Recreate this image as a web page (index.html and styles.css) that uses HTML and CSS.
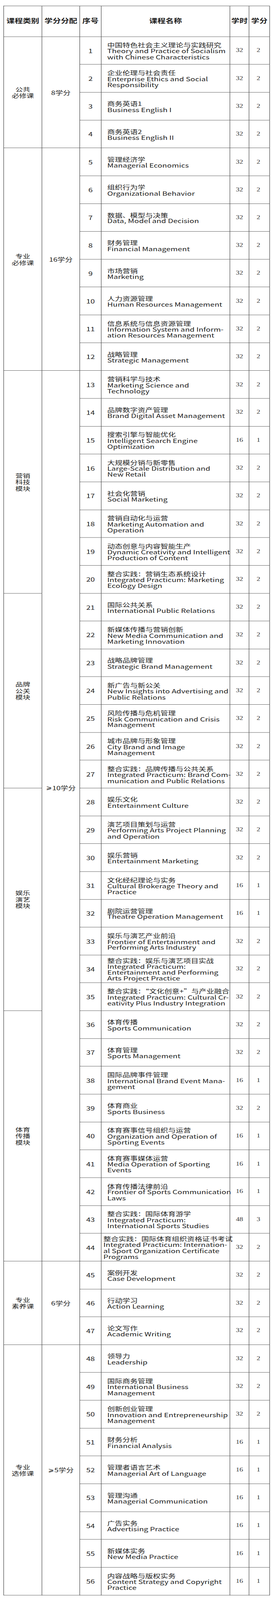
FILE: index.html
```html
<!DOCTYPE html>
<html lang="zh-CN">
<head>
<meta charset="utf-8">
<title>课程设置</title>
<link rel="stylesheet" href="styles.css">
</head>
<body>
<div class="frame">
<div class="page">
<div class="grid">
  <div class="h">课程类别</div>
  <div class="h">学分分配</div>
  <div class="h">序号</div>
  <div class="h">课程名称</div>
  <div class="h">学时</div>
  <div class="h">学分</div>

  <div class="cat s4">公共<br>必修课</div>
  <div class="cr s4">8学分</div>
  <div class="no">1</div><div class="nm"><div class="t"><span class="zh">中国特色社会主义理论与实践研究</span><span class="en">Theory and Practice of Socialism</span><span class="en">with Chinese Characteristics</span></div></div><div class="hr">32</div><div class="pt">2</div>
  <div class="no">2</div><div class="nm"><div class="t"><span class="zh">企业伦理与社会责任</span><span class="en">Enterprise Ethics and Social</span><span class="en">Responsibility</span></div></div><div class="hr">32</div><div class="pt">2</div>
  <div class="no">3</div><div class="nm"><div class="t"><span class="zh">商务英语1</span><span class="en">Business English I</span></div></div><div class="hr">32</div><div class="pt">2</div>
  <div class="no">4</div><div class="nm"><div class="t"><span class="zh">商务英语2</span><span class="en">Business English II</span></div></div><div class="hr">32</div><div class="pt">2</div>

  <div class="cat s8">专业<br>必修课</div>
  <div class="cr s8">16学分</div>
  <div class="no">5</div><div class="nm"><div class="t"><span class="zh">管理经济学</span><span class="en">Managerial Economics</span></div></div><div class="hr">32</div><div class="pt">2</div>
  <div class="no">6</div><div class="nm"><div class="t"><span class="zh">组织行为学</span><span class="en">Organizational Behavior</span></div></div><div class="hr">32</div><div class="pt">2</div>
  <div class="no">7</div><div class="nm"><div class="t"><span class="zh">数据、模型与决策</span><span class="en">Data, Model and Decision</span></div></div><div class="hr">32</div><div class="pt">2</div>
  <div class="no">8</div><div class="nm"><div class="t"><span class="zh">财务管理</span><span class="en">Financial Management</span></div></div><div class="hr">32</div><div class="pt">2</div>
  <div class="no">9</div><div class="nm"><div class="t"><span class="zh">市场营销</span><span class="en">Marketing</span></div></div><div class="hr">32</div><div class="pt">2</div>
  <div class="no">10</div><div class="nm"><div class="t"><span class="zh">人力资源管理</span><span class="en">Human Resources Management</span></div></div><div class="hr">32</div><div class="pt">2</div>
  <div class="no">11</div><div class="nm"><div class="t"><span class="zh">信息系统与信息资源管理</span><span class="en">Information System and Inform-</span><span class="en">ation Resources Management</span></div></div><div class="hr">32</div><div class="pt">2</div>
  <div class="no">12</div><div class="nm"><div class="t"><span class="zh">战略管理</span><span class="en">Strategic Management</span></div></div><div class="hr">32</div><div class="pt">2</div>

  <div class="cat s8">营销<br>科技<br>模块</div>
  <div class="cr s32 offset"><span class="ge">⩾</span>10学分</div>
  <div class="no">13</div><div class="nm"><div class="t"><span class="zh">营销科学与技术</span><span class="en">Marketing Science and</span><span class="en">Technology</span></div></div><div class="hr">32</div><div class="pt">2</div>
  <div class="no">14</div><div class="nm"><div class="t"><span class="zh">品牌数字资产管理</span><span class="en">Brand Digital Asset Management</span></div></div><div class="hr">32</div><div class="pt">2</div>
  <div class="no">15</div><div class="nm"><div class="t"><span class="zh">搜索引擎与智能优化</span><span class="en">Intelligent Search Engine</span><span class="en">Optimization</span></div></div><div class="hr">16</div><div class="pt">1</div>
  <div class="no">16</div><div class="nm"><div class="t"><span class="zh">大规模分销与新零售</span><span class="en">Large-Scale Distribution and</span><span class="en">New Retail</span></div></div><div class="hr">32</div><div class="pt">2</div>
  <div class="no">17</div><div class="nm"><div class="t"><span class="zh">社会化营销</span><span class="en">Social Marketing</span></div></div><div class="hr">32</div><div class="pt">2</div>
  <div class="no">18</div><div class="nm"><div class="t"><span class="zh">营销自动化与运营</span><span class="en">Marketing Automation and</span><span class="en">Operation</span></div></div><div class="hr">32</div><div class="pt">2</div>
  <div class="no">19</div><div class="nm"><div class="t"><span class="zh">动态创意与内容智能生产</span><span class="en">Dynamic Creativity and Intelligent</span><span class="en">Production of Content</span></div></div><div class="hr">32</div><div class="pt">2</div>
  <div class="no">20</div><div class="nm"><div class="t"><span class="zh">整合实践：营销生态系统设计</span><span class="en">Integrated Practicum: Marketing</span><span class="en">Ecology Design</span></div></div><div class="hr">32</div><div class="pt">2</div>

  <div class="cat s7">品牌<br>公关<br>模块</div>
  <div class="no">21</div><div class="nm"><div class="t"><span class="zh">国际公共关系</span><span class="en">International Public Relations</span></div></div><div class="hr">32</div><div class="pt">2</div>
  <div class="no">22</div><div class="nm"><div class="t"><span class="zh">新媒体传播与营销创新</span><span class="en">New Media Communication and</span><span class="en">Marketing Innovation</span></div></div><div class="hr">32</div><div class="pt">2</div>
  <div class="no">23</div><div class="nm"><div class="t"><span class="zh">战略品牌管理</span><span class="en">Strategic Brand Management</span></div></div><div class="hr">32</div><div class="pt">2</div>
  <div class="no">24</div><div class="nm"><div class="t"><span class="zh">新广告与新公关</span><span class="en">New Insights into Advertising and</span><span class="en">Public Relations</span></div></div><div class="hr">32</div><div class="pt">2</div>
  <div class="no">25</div><div class="nm"><div class="t"><span class="zh">风险传播与危机管理</span><span class="en">Risk Communication and Crisis</span><span class="en">Management</span></div></div><div class="hr">32</div><div class="pt">2</div>
  <div class="no">26</div><div class="nm"><div class="t"><span class="zh">城市品牌与形象管理</span><span class="en">City Brand and Image</span><span class="en">Management</span></div></div><div class="hr">32</div><div class="pt">2</div>
  <div class="no">27</div><div class="nm"><div class="t"><span class="zh">整合实践：品牌传播与公共关系</span><span class="en">Integrated Practicum: Brand Com-</span><span class="en">munication and Public Relations</span></div></div><div class="hr">32</div><div class="pt">2</div>

  <div class="cat s8">娱乐<br>演艺<br>模块</div>
  <div class="no">28</div><div class="nm"><div class="t"><span class="zh">娱乐文化</span><span class="en">Entertainment Culture</span></div></div><div class="hr">32</div><div class="pt">2</div>
  <div class="no">29</div><div class="nm"><div class="t"><span class="zh">演艺项目策划与运营</span><span class="en">Performing Arts Project Planning</span><span class="en">and Operation</span></div></div><div class="hr">32</div><div class="pt">2</div>
  <div class="no">30</div><div class="nm"><div class="t"><span class="zh">娱乐营销</span><span class="en">Entertainment Marketing</span></div></div><div class="hr">32</div><div class="pt">2</div>
  <div class="no">31</div><div class="nm"><div class="t"><span class="zh">文化经纪理论与实务</span><span class="en">Cultural Brokerage Theory and</span><span class="en">Practice</span></div></div><div class="hr">16</div><div class="pt">1</div>
  <div class="no">32</div><div class="nm"><div class="t"><span class="zh">剧院运营管理</span><span class="en">Theatre Operation Management</span></div></div><div class="hr">16</div><div class="pt">1</div>
  <div class="no">33</div><div class="nm"><div class="t"><span class="zh">娱乐与演艺产业前沿</span><span class="en">Frontier of Entertainment and</span><span class="en">Performing Arts Industry</span></div></div><div class="hr">32</div><div class="pt">2</div>
  <div class="no">34</div><div class="nm"><div class="t"><span class="zh">整合实践：娱乐与演艺项目实战</span><span class="en">Integrated Practicum:</span><span class="en">Entertainment and Performing</span><span class="en">Arts Project Practice</span></div></div><div class="hr">32</div><div class="pt">2</div>
  <div class="no">35</div><div class="nm"><div class="t"><span class="zh">整合实践：“文化创意+”与产业融合</span><span class="en">Integrated Practicum: Cultural Cr-</span><span class="en">eativity Plus Industry Integration</span></div></div><div class="hr">32</div><div class="pt">2</div>

  <div class="cat s9">体育<br>传播<br>模块</div>
  <div class="no">36</div><div class="nm"><div class="t"><span class="zh">体育传播</span><span class="en">Sports Communication</span></div></div><div class="hr">32</div><div class="pt">2</div>
  <div class="no">37</div><div class="nm"><div class="t"><span class="zh">体育管理</span><span class="en">Sports Management</span></div></div><div class="hr">32</div><div class="pt">2</div>
  <div class="no">38</div><div class="nm"><div class="t"><span class="zh">国际品牌事件管理</span><span class="en">International Brand Event Mana-</span><span class="en">gement</span></div></div><div class="hr">16</div><div class="pt">1</div>
  <div class="no">39</div><div class="nm"><div class="t"><span class="zh">体育商业</span><span class="en">Sports Business</span></div></div><div class="hr">32</div><div class="pt">2</div>
  <div class="no">40</div><div class="nm"><div class="t"><span class="zh">体育赛事信号组织与运营</span><span class="en">Organization and Operation of</span><span class="en">Sporting Events</span></div></div><div class="hr">16</div><div class="pt">1</div>
  <div class="no">41</div><div class="nm"><div class="t"><span class="zh">体育赛事媒体运营</span><span class="en">Media Operation of Sporting</span><span class="en">Events</span></div></div><div class="hr">16</div><div class="pt">1</div>
  <div class="no">42</div><div class="nm"><div class="t"><span class="zh">体育传播法律前沿</span><span class="en">Frontier of Sports Communication</span><span class="en">Laws</span></div></div><div class="hr">16</div><div class="pt">1</div>
  <div class="no">43</div><div class="nm"><div class="t"><span class="zh">整合实践：国际体育游学</span><span class="en">Integrated Practicum:</span><span class="en">International Sports Studies</span></div></div><div class="hr">48</div><div class="pt">3</div>
  <div class="no">44</div><div class="nm wide"><div class="t"><span class="zh">整合实践：国际体育组织资格证书考试</span><span class="en">Integrated Practicum: Internation-</span><span class="en">al Sport Organization Certificate</span><span class="en">Programs</span></div></div><div class="hr">32</div><div class="pt">2</div>

  <div class="cat s3">专业<br>素养课</div>
  <div class="cr s3">6学分</div>
  <div class="no">45</div><div class="nm"><div class="t"><span class="zh">案例开发</span><span class="en">Case Development</span></div></div><div class="hr">32</div><div class="pt">2</div>
  <div class="no">46</div><div class="nm"><div class="t"><span class="zh">行动学习</span><span class="en">Action Learning</span></div></div><div class="hr">32</div><div class="pt">2</div>
  <div class="no">47</div><div class="nm"><div class="t"><span class="zh">论文写作</span><span class="en">Academic Writing</span></div></div><div class="hr">32</div><div class="pt">2</div>

  <div class="cat s9">专业<br>选修课</div>
  <div class="cr s9"><span class="ge">⩾</span>5学分</div>
  <div class="no">48</div><div class="nm"><div class="t"><span class="zh">领导力</span><span class="en">Leadership</span></div></div><div class="hr">32</div><div class="pt">2</div>
  <div class="no">49</div><div class="nm"><div class="t"><span class="zh">国际商务管理</span><span class="en">International Business</span><span class="en">Management</span></div></div><div class="hr">32</div><div class="pt">2</div>
  <div class="no">50</div><div class="nm"><div class="t"><span class="zh">创新创业管理</span><span class="en">Innovation and Entrepreneurship</span><span class="en">Management</span></div></div><div class="hr">32</div><div class="pt">2</div>
  <div class="no">51</div><div class="nm"><div class="t"><span class="zh">财务分析</span><span class="en">Financial Analysis</span></div></div><div class="hr">16</div><div class="pt">1</div>
  <div class="no">52</div><div class="nm"><div class="t"><span class="zh">管理者语言艺术</span><span class="en">Managerial Art of Language</span></div></div><div class="hr">16</div><div class="pt">1</div>
  <div class="no">53</div><div class="nm"><div class="t"><span class="zh">管理沟通</span><span class="en">Managerial Communication</span></div></div><div class="hr">16</div><div class="pt">1</div>
  <div class="no">54</div><div class="nm"><div class="t"><span class="zh">广告实务</span><span class="en">Advertising Practice</span></div></div><div class="hr">16</div><div class="pt">1</div>
  <div class="no">55</div><div class="nm"><div class="t"><span class="zh">新媒体实务</span><span class="en">New Media Practice</span></div></div><div class="hr">16</div><div class="pt">1</div>
  <div class="no">56</div><div class="nm"><div class="t"><span class="zh">内容战略与版权实务</span><span class="en">Content Strategy and Copyright</span><span class="en">Practice</span></div></div><div class="hr">16</div><div class="pt">1</div>
</div>
</div>
</div>
<script src="script.js"></script>
</body>
</html>
```

FILE: styles.css
```css
* { box-sizing: border-box; }
html, body { margin: 0; padding: 0; background: #ffffff; }
body {
  font-family: "Noto Sans CJK SC", "Noto Sans", sans-serif;
  color: #1c1c1c;
}
/* the capture window can be shorter than the 5556px design;
   the sheet is laid out at design size and fitted to the window height */
.frame {
  height: 100vh;
  overflow: hidden;
}
.page {
  height: 5556px;
  padding: 20px 0 0 9px;
  transform-origin: 0 0;
  transform: scaleY(var(--sy, 0.73722));
}
.grid {
  display: grid;
  width: 683px;
  grid-template-columns: 98px 97px 55px 330px 49px 53px;
  grid-template-rows: 106.7px;
  grid-auto-rows: 96.65px;
  border-top: 1px solid #222222;
  border-left: 1px solid #222222;
}
.grid > div {
  border-right: 1px solid #222222;
  border-bottom: 1px solid #2e2e2e;
  display: flex;
  align-items: center;
  justify-content: center;
  text-align: center;
}
.h {
  font-weight: 700;
  font-size: 21px;
  white-space: nowrap;
  padding-bottom: 5px;
}
.cat { grid-column: 1; font-size: 19px; line-height: 22.5px; }
.cr { grid-column: 2; font-size: 19.5px; }
.no { grid-column: 3; font-size: 20px; }
.nm {
  grid-column: 4;
  justify-content: flex-start !important;
  text-align: left !important;
  padding-left: 15px;
  padding-top: 4px;
}
.nm.wide { padding-left: 5px; }
.t span {
  display: block;
  white-space: nowrap;
  line-height: 20.7px;
}
.t .zh { font-size: 19.5px; }
.t .en { font-size: 20px; }
.hr, .pt {
  font-family: "Liberation Serif", "Times New Roman", serif;
  font-size: 18.5px;
  color: #333333;
}
.hr { grid-column: 5; }
.pt { grid-column: 6; padding-right: 5px; }
.s3 { grid-row: span 3; }
.s4 { grid-row: span 4; }
.s7 { grid-row: span 7; }
.s8 { grid-row: span 8; }
.s9 { grid-row: span 9; }
.s32 { grid-row: span 32; }
.offset { padding-bottom: 196px; }
.ge { font-family: "DejaVu Sans", sans-serif; font-size: 18px; margin-right: 1px; }
```

FILE: script.js
```js
(function () {
  var s = Math.min(1, window.innerHeight / 5556);
  document.documentElement.style.setProperty('--sy', String(s));
})();
```
